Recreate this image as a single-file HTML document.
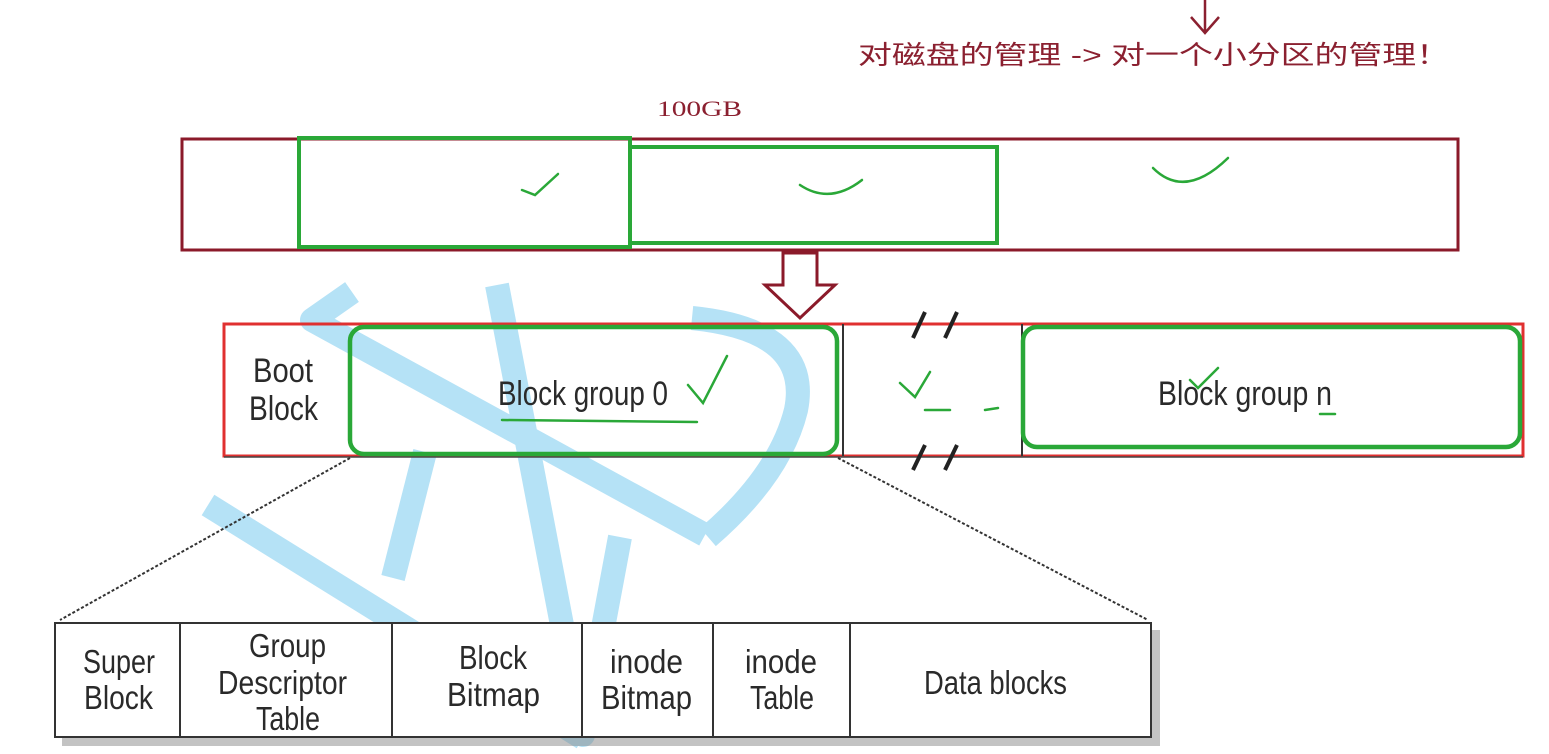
<!DOCTYPE html>
<html><head><meta charset="utf-8"><style>
html,body{margin:0;padding:0;background:#fff;width:1549px;height:754px;overflow:hidden}
svg{display:block}
.n{font-family:"Liberation Sans",sans-serif;fill:#2a2a2a;font-size:34px}
.t{font-family:"Liberation Sans",sans-serif;fill:#2a2a2a;font-size:33px}
</style></head><body>
<svg width="1549" height="754" viewBox="0 0 1549 754">
<g fill="none" stroke="#b5e2f6" stroke-width="24" stroke-linejoin="round">
<path d="M352 292 L312 320 L705 535"/>
<path d="M692 318 Q812 330 796 410 Q780 475 708 537"/>
<path d="M497 285 L583 735 L620 537"/>
<path d="M208 505 L583 738"/>
<path d="M425 452 L393 578"/>
</g>
<text x="858" y="64" textLength="592" lengthAdjust="spacingAndGlyphs" font-family="'Liberation Sans','Noto Sans CJK SC',sans-serif" font-size="26" fill="#8b2030">对磁盘的管理 -&gt; 对一个小分区的管理！</text>
<path d="M1205 0 L1205 32 M1191 17 L1205 33 L1219 17" stroke="#8b2030" stroke-width="2.5" fill="none"/>
<text x="657" y="116" textLength="85" lengthAdjust="spacingAndGlyphs" font-family="'Liberation Serif',serif" font-size="22" fill="#8b2030">100GB</text>
<rect x="182" y="139" width="1276" height="111" fill="none" stroke="#8b1a2a" stroke-width="3"/>
<rect x="299" y="138" width="331" height="109" fill="none" stroke="#2aa838" stroke-width="4"/>
<rect x="630" y="147" width="367" height="96" fill="none" stroke="#2aa838" stroke-width="4"/>
<g fill="none" stroke="#2aa838" stroke-width="2.5" stroke-linecap="round">
<path d="M522 190 L535 195 L558 174"/>
<path d="M800 185 Q830 205 862 180"/>
<path d="M1153 168 Q1185 200 1228 158"/>
<path d="M688 385 L703 403 L727 356"/>
<path d="M502 420 L697 422"/>
<path d="M900 383 L915 397 L930 372"/>
<path d="M925 410 L950 410 M985 410 L998 408"/>
<path d="M1190 380 L1198 388 L1218 368"/>
<path d="M1320 414 L1335 414"/>
</g>
<path d="M783 253 L817 253 L817 285 L835 285 L800 318 L765 285 L783 285 Z" fill="#fff" stroke="#8b1a2a" stroke-width="3"/>
<rect x="224" y="324" width="1299" height="132" fill="none" stroke="#e03030" stroke-width="3"/>
<line x1="843" y1="324" x2="843" y2="456" stroke="#333" stroke-width="2"/>
<line x1="1022" y1="324" x2="1022" y2="456" stroke="#333" stroke-width="2"/>
<line x1="224" y1="457" x2="1523" y2="457" stroke="#444" stroke-width="1.5"/>
<rect x="350" y="327" width="487" height="127" rx="14" fill="none" stroke="#2aa838" stroke-width="4.5"/>
<rect x="1023" y="327" width="497" height="120" rx="14" fill="none" stroke="#2aa838" stroke-width="4.5"/>
<g stroke="#222" stroke-width="4"><path d="M913 338 L925 312 M945 338 L957 312 M913 470 L925 445 M945 470 L957 445"/></g>
<text class="n" x="253" y="382" textLength="60" lengthAdjust="spacingAndGlyphs">Boot</text>
<text class="n" x="249" y="420" textLength="69" lengthAdjust="spacingAndGlyphs">Block</text>
<text class="n" x="498" y="405" textLength="170" lengthAdjust="spacingAndGlyphs">Block group 0</text>
<text class="n" x="1158" y="405" textLength="174" lengthAdjust="spacingAndGlyphs">Block group n</text>
<path d="M350 458 L60 620 M838 458 L1148 620" stroke="#333" stroke-width="2" stroke-dasharray="3 2" fill="none"/>
<rect x="62" y="630" width="1098" height="116" fill="#888" opacity="0.5"/>
<rect x="55" y="623" width="1096" height="114" fill="#fff" stroke="#333" stroke-width="2"/>
<g stroke="#333" stroke-width="2"><path d="M180 623V737M392 623V737M582 623V737M713 623V737M850 623V737"/></g>
<g class="t">
<text x="83" y="673" textLength="72" lengthAdjust="spacingAndGlyphs">Super</text>
<text x="84" y="709" textLength="69" lengthAdjust="spacingAndGlyphs">Block</text>
<text x="249" y="657" textLength="77" lengthAdjust="spacingAndGlyphs">Group</text>
<text x="218" y="694" textLength="129" lengthAdjust="spacingAndGlyphs">Descriptor</text>
<text x="256" y="730" textLength="64" lengthAdjust="spacingAndGlyphs">Table</text>
<text x="459" y="669" textLength="68" lengthAdjust="spacingAndGlyphs">Block</text>
<text x="447" y="706" textLength="93" lengthAdjust="spacingAndGlyphs">Bitmap</text>
<text x="610" y="673" textLength="73" lengthAdjust="spacingAndGlyphs">inode</text>
<text x="601" y="709" textLength="91" lengthAdjust="spacingAndGlyphs">Bitmap</text>
<text x="745" y="673" textLength="72" lengthAdjust="spacingAndGlyphs">inode</text>
<text x="750" y="709" textLength="64" lengthAdjust="spacingAndGlyphs">Table</text>
<text x="924" y="694" textLength="143" lengthAdjust="spacingAndGlyphs">Data blocks</text>
</g>
</svg>
</body></html>
